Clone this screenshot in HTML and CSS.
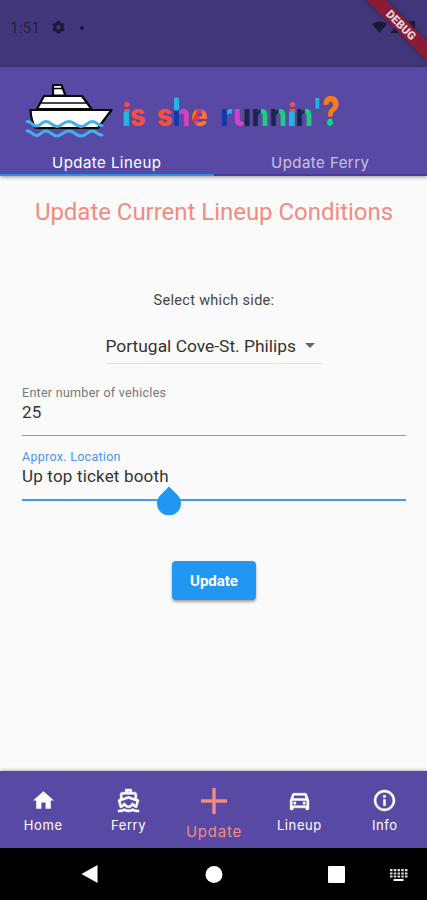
FILE: index.html
```html
<!DOCTYPE html>
<html lang="en">
<head>
<meta charset="utf-8">
<title>is she runnin'?</title>
<link rel="stylesheet" href="styles.css">
</head>
<body>
<div class="screen">
  <div class="status">
    <span class="clock">1:51</span>
    <svg class="gear" viewBox="0 0 24 24"><path fill-rule="evenodd" d="M9.8 2h4.4l.5 2.8 1.7 1 2.7-1 2.2 3.8-2.2 1.8v2.2l2.2 1.8-2.2 3.8-2.7-1-1.7 1-.5 2.8H9.800l-.5-2.8-1.700-1-2.700 1-2.200-3.800 2.200-1.800v-2.200L2.700 8.600l2.200-3.800 2.700 1 1.700-1zM12 7.500a4 4 0 1 0 0 8 4 4 0 0 0 0-8z"/></svg>
    <span class="dot"></span>
    <svg class="signals" viewBox="0 0 50 16"><path d="M0 4Q7.500-1 15 4L7.500 13zM18 13L29 2v11zM37 1h6v12h-6z"/></svg>
    <div class="ribbon">DEBUG</div>
  </div>
  <header class="appbar">
    <svg class="logo" viewBox="0 0 340 80" role="img">
      <defs>
        <linearGradient id="h"><stop offset=".36" stop-color="#1537ae"/><stop offset=".37" stop-color="#d63fc6"/></linearGradient>
        <linearGradient id="iv" x1="0" y1="0" x2="0" y2="1"><stop offset=".43" stop-color="#f15045"/><stop offset=".44" stop-color="#22b4e3"/></linearGradient>
        <linearGradient id="e" x1="0" y1="0" x2="1" y2="1"><stop offset=".35" stop-color="#ff7a16"/><stop offset=".4" stop-color="#e52f3c"/><stop offset=".53" stop-color="#c341b4"/><stop offset=".6" stop-color="#ff7a16"/></linearGradient>
        <linearGradient id="r"><stop offset=".5" stop-color="#1537ae"/><stop offset=".55" stop-color="#22b4e3"/></linearGradient>
        <linearGradient id="u"><stop offset=".58" stop-color="#d63fc6"/><stop offset=".62" stop-color="#17264f"/></linearGradient>
        <linearGradient id="n"><stop offset=".5" stop-color="#17264f"/><stop offset=".56" stop-color="#17cf83"/></linearGradient>
        <linearGradient id="q" x1="0" y1="0" x2="0" y2="1"><stop offset=".69" stop-color="#ff7a16"/><stop offset=".7" stop-color="#17cf83"/></linearGradient>
      </defs>
      <g class="ship">
        <path d="M38 28.500V18h8.500l4 10.500zM29 29h38l9.500 13H22zM15.500 43h81L83 61H21Q16 55 15.500 43z"/>
        <path class="decks" d="M26 36h45M38 21.500h9"/>
      </g>
      <g class="waves">
        <path d="M12 54.500c4-1 5 4.500 9.500 4.500S26 54.500 31 54.500s6 5 11 5 6-5 12-5 6 5 12 5 6-5 11-5 5 4 10 4"/>
        <path d="M12 64c4-1 5 4.500 9.500 4.500S26 64 31 64s6 5 11 5 6-5 12-5 6 5 12 5 6-5 11-5 5 4 10 4"/>
      </g>
      <g class="word">
        <text x="107" y="58.500" textLength="9" lengthAdjust="spacingAndGlyphs" fill="url(#iv)">i</text>
        <text x="115" y="58.500" textLength="15.500" lengthAdjust="spacingAndGlyphs" fill="#f15045">s</text>
        <text x="142" y="58.500" textLength="15.500" lengthAdjust="spacingAndGlyphs" fill="#f15045">s</text>
        <text x="157.500" y="58.500" textLength="17.500" lengthAdjust="spacingAndGlyphs" fill="url(#h)">h</text>
        <text x="176" y="58.500" textLength="16.500" lengthAdjust="spacingAndGlyphs" fill="url(#e)">e</text>
        <text x="205" y="58.500" textLength="12.500" lengthAdjust="spacingAndGlyphs" fill="url(#r)">r</text>
        <text x="218" y="58.500" textLength="18" lengthAdjust="spacingAndGlyphs" fill="url(#u)">u</text>
        <text x="236.500" y="58.500" textLength="17.500" lengthAdjust="spacingAndGlyphs" fill="url(#n)">n</text>
        <text x="254.500" y="58.500" textLength="17.500" lengthAdjust="spacingAndGlyphs" fill="url(#n)">n</text>
        <text x="272.500" y="58.500" textLength="9" lengthAdjust="spacingAndGlyphs" fill="url(#iv)">i</text>
        <text x="280.500" y="58.500" textLength="17.500" lengthAdjust="spacingAndGlyphs" fill="url(#n)">n</text>
        <text class="tick" x="298" y="55.500" textLength="9" lengthAdjust="spacingAndGlyphs" fill="#22b4e3">'</text>
        <text class="question" x="307" y="58.500" textLength="17.500" lengthAdjust="spacingAndGlyphs" fill="url(#q)">?</text>
        <rect x="159" y="30.500" width="5" height="13" rx="1.500" fill="#27b3e4"/>
      </g>
    </svg>
    <nav class="tabs">
      <div class="tab active"><span>Update Lineup</span></div>
      <div class="tab"><span>Update Ferry</span></div>
    </nav>
  </header>
  <main>
    <h1>Update Current Lineup Conditions</h1>
    <p class="prompt">Select which side:</p>
    <div class="select"><span>Portugal Cove-St. Philips</span><i class="caret"></i></div>
    <div class="field"><label>Enter number of vehicles</label><div class="value">25</div></div>
    <div class="field focus"><label>Approx. Location</label><div class="value">Up top ticket booth</div>
      <svg class="handle" viewBox="0 0 24 28"><path d="M12 0l8.500 8.500A12 12 0 1 1 3.500 8.500z"/></svg></div>
    <button>Update</button>
  </main>
  <nav class="bottom">
    <div class="item"><svg viewBox="0 0 24 24"><path d="M10 20v-6h4v6h5v-8h3L12 3 2 12h3v8z"/></svg><span>Home</span></div>
    <div class="item"><svg viewBox="0 0 24 24"><path d="M13,3v1h-2V3H13 M12,10.11l5.38,1.77l2.39,0.78l-1.12,3.97c-0.54-0.3-0.94-0.71-1.14-0.94L16,13.96l-1.51,1.72c-0.34,0.4-1.28,1.32-2.49,1.32c-1.21,0-2.15-0.92-2.49-1.32L8,13.96l-1.51,1.72c-0.2,0.23-0.6,0.63-1.14,0.93l-1.13-3.96l2.4-0.79L12,10.11 M15,1H9v3H6C4.9,4,4,4.9,4,6v4.62l-1.29,0.42c-0.26,0.08-0.48,0.26-0.6,0.5s-0.15,0.52-0.06,0.78L3.95,19H4c1.6,0,3.02-0.88,4-2c0.98,1.12,2.4,2,4,2s3.02-0.88,4-2c0.98,1.12,2.4,2,4,2h0.05l1.91-6.68c0.11-0.37,0.04-1.06-0.66-1.28L20,10.62V6c0-1.1-0.9-2-2-2h-3V1z M6,9.97V6h12v3.97L12,8z M16,19.68c-1.22,0.85-2.61,1.28-4,1.28s-2.78-0.43-4-1.28C6.78,20.53,5.39,21,4,21H2v2h2c1.38,0,2.74-0.35,4-0.99c1.26,0.64,2.63,0.97,4,0.97s2.74-0.32,4-0.97c1.26,0.65,2.62,0.99,4,0.99h2v-2h-2C18.61,21,17.22,20.53,16,19.68z" fill-rule="evenodd" class="heavy"/></svg><span>Ferry</span></div>
    <div class="item current"><svg viewBox="0 0 26 26"><path d="M11.300 0h3.400v11.300H26v3.400H14.700V26h-3.400V14.700H0v-3.400h11.300z"/></svg><span>Update</span></div>
    <div class="item"><svg viewBox="0 0 24 24"><path class="heavy" fill-rule="evenodd" d="M18.920 6.010C18.720 5.420 18.160 5 17.500 5h-11c-.66 0-1.210.42-1.420 1.010L3 12v8c0 .55.45 1 1 1h1c.55 0 1-.45 1-1v-1h12v1c0 .55.45 1 1 1h1c.55 0 1-.45 1-1v-8zM6.850 7h10.290l1.080 3.110H5.770zM19 17H5v-5h14z"/><circle cx="7.500" cy="14.500" r="1.500"/><circle cx="16.500" cy="14.500" r="1.500"/></svg><span>Lineup</span></div>
    <div class="item"><svg viewBox="0 0 24 24"><path class="heavy" d="M11 7h2v2h-2zm0 4h2v6h-2zm1-9C6.480 2 2 6.480 2 12s4.480 10 10 10 10-4.480 10-10S17.520 2 12 2zm0 18c-4.410 0-8-3.590-8-8s3.590-8 8-8 8 3.590 8 8-3.590 8-8 8z"/></svg><span>Info</span></div>
  </nav>
  <div class="system">
    <svg viewBox="0 0 427 52"><path d="M97.500 17v18L81.500 26z"/><circle cx="214" cy="26.500" r="8.500"/><rect x="328" y="18" width="17" height="17" rx="1"/><path class="keys" d="M390 22.200h17.500M390 25.500h17.500M390 28.500h17.500"/><path d="M393.500 31h10v2h-10z"/></svg>
  </div>
</div>
</body>
</html>
```
FILE: styles.css
```css
* { box-sizing: border-box; }
body { margin: 0; font-family: Roboto, sans-serif; }
.screen { width: 427px; height: 900px; display: flex; flex-direction: column; overflow: hidden; background: #fafafa; }
.status { position: relative; height: 67px; flex: none; display: flex; align-items: center; padding: 0 0 12px 10px; background: #41377a; color: #241f45; overflow: hidden; }
.clock { width: 41px; font-size: 15.500px; }
.gear { width: 15px; height: 15px; fill: #1c1838; stroke: #1c1838; }
.dot { width: 4px; height: 4px; margin-left: 14px; border-radius: 50%; background: #1c1838; }
.signals { width: 50px; height: 16px; margin-left: 288px; fill: #1c1838; }
.ribbon { position: absolute; left: 341px; top: 18px; width: 120px; height: 14px; transform: rotate(45deg); background: #8a1b35; color: #e0d6dc; font-size: 11.500px; line-height: 14px; font-weight: 900; text-align: center; box-shadow: 0 0 5px #2c2458; }
.appbar { position: relative; z-index: 1; height: 109px; flex: none; display: flex; flex-direction: column; background: #5849a4; box-shadow: 0 1px 4px rgba(0,0,0,.4); }
.logo { width: 340px; height: 80px; margin-left: 15px; flex: none; }
.ship path { fill: #fff; stroke: #080808; stroke-width: 2.200; stroke-linejoin: round; }
.ship .decks { stroke-width: 1.600; }
.waves path { fill: none; stroke: #45aeef; stroke-width: 3; stroke-linecap: round; }
.word { font: 800 30px Inter, sans-serif; }
.word .tick { font-size: 34px; }
.word .question { font-size: 41px; }
.tabs { display: flex; height: 29px; }
.tab { flex: 1; text-align: center; font: 15px/31px Inter, sans-serif; letter-spacing: 0.450px; color: #c8c2e2; border-bottom: 2px solid #4735a0; }
.tab.active { color: #fff; border-color: #2196f3; }
main { flex: 1; display: flex; flex-direction: column; align-items: center; padding: 0 21px 0 22px; }
h1 { margin: 21px 0 0; font-size: 24px; line-height: 30px; font-weight: 400; letter-spacing: -0.030px; color: #f28b82; white-space: nowrap; }
.prompt { margin: 64px 0 0; font-size: 14.500px; line-height: 20px; letter-spacing: 0.300px; color: #444; }
.select { width: 217px; height: 36px; margin-top: 17px; display: flex; align-items: center; gap: 9px; border-bottom: 1px solid #e2e2e2; font-size: 17.400px; color: #333; white-space: nowrap; }
.caret { border: 5px solid transparent; border-top-color: #666; border-bottom: 0; }
.field { position: relative; width: 100%; height: 52px; margin-top: 20px; border-bottom: 1px solid #999; }
.field label { display: block; font-size: 12.500px; line-height: 18px; letter-spacing: 0.280px; color: #777; }
.value { font-size: 17px; line-height: 21px; letter-spacing: 0.180px; color: #333; }
.field.focus { margin-top: 0; padding-top: 12px; height: 65px; border-bottom: 2px solid #4299ec; }
.focus label { color: #4b95ef; }
.handle { position: absolute; left: 135px; top: 50px; width: 24px; height: 29px; fill: #2196f3; }
button { width: 84px; height: 39px; margin-top: 60px; padding: 0; border: 0; border-radius: 4px; background: #2196f3; color: #fff; font: 700 15px Roboto, sans-serif; box-shadow: 0 2px 3px rgba(0,0,0,.35); }
.bottom { height: 77px; flex: none; display: flex; background: #5849a4; color: #fff; box-shadow: 0 -1px 3px rgba(0,0,0,.25); }
.item { flex: 1; display: flex; flex-direction: column; align-items: center; padding: 17px 0 0 1px; font: 13px/18px Inter, sans-serif; letter-spacing: 0.600px; }
.item svg { width: 25px; height: 25px; margin-bottom: 3px; fill: currentColor; flex: none; }
.item .heavy { stroke: currentColor; stroke-width: 0.500; }
.item.current { color: #f28b82; font-size: 15px; letter-spacing: 0.800px; }
.item.current svg { width: 26px; height: 26px; margin-bottom: 9px; }
.system { height: 52px; flex: none; background: #000; }
.system svg { display: block; width: 427px; height: 52px; fill: #fff; }
.system .keys { stroke: #ddd; stroke-width: 2.200; stroke-dasharray: 2.500 1.250; }
```
